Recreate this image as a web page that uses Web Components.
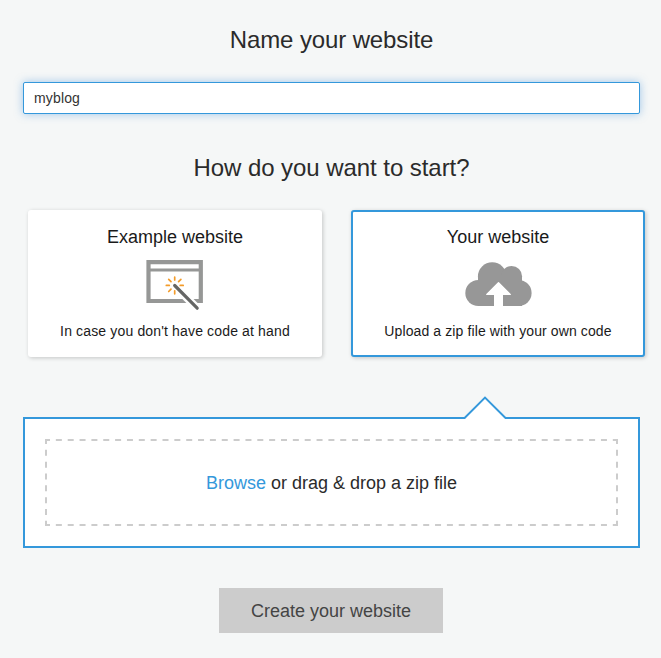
<!DOCTYPE html>
<html lang="en">
<head>
<meta charset="utf-8">
<title>Create website</title>
<style>
html, body { margin: 0; height: 100%; background: #f5f7f7; }
body { font-family: "Liberation Sans", Arial, sans-serif; color: #2b2b2b; overflow: hidden; }
</style>
</head>
<body>
<website-wizard></website-wizard>
<script>
const define = (name, html) => {
  const template = document.createElement('template');
  template.innerHTML = html;
  customElements.define(name, class extends HTMLElement {
    constructor() {
      super();
      this.attachShadow({ mode: 'open' }).append(template.content.cloneNode(true));
    }
  });
};

define('section-title', `
<style>
:host { display: block; height: 28px; font-size: 24px; line-height: 28px; text-align: center; }
</style>
<slot></slot>`);

define('name-field', `
<style>
:host { display: block; }
div { box-sizing: border-box; height: 32px; padding: 0 10px; border: 1px solid #3498db; border-radius: 2px;
  background: #fff; box-shadow: 0 0 8px rgba(72,148,220,.5); font-size: 14px; line-height: 30px; letter-spacing: .15px; color: #333; }
</style>
<div role="textbox"><slot></slot></div>`);

define('browser-icon', `
<style>:host, svg { display: block; width: 58px; height: 52px; }</style>
<svg viewBox="146 259 58 52" fill="none">
  <path d="M148.500 262.200H200.800V301H148.500Z" stroke="#969796" stroke-width="4.200"/>
  <path d="M148 270H201" stroke="#969796" stroke-width="3"/>
  <path d="M174.500 285.500L198.500 309.500" stroke="#fff" stroke-width="8"/>
  <path d="M174.700 277.200V280M174.700 290.800V293.800M166.300 285.400H169.300M180.200 285.400H183.200M168.700 279.300L171 281.600M180.900 279.300L178.600 281.600M168.700 291.500L171 289.200" stroke="#f39c2b" stroke-width="1.700" stroke-linecap="round"/>
  <path d="M174.700 285.500L197.200 308.200" stroke="#656665" stroke-width="3.200" stroke-linecap="round"/>
</svg>`);

define('cloud-icon', `
<style>:host, svg { display: block; width: 68px; height: 52px; }</style>
<svg viewBox="464 259 68 52" fill="#979797">
  <circle cx="478.300" cy="293" r="13"/>
  <circle cx="518.600" cy="293" r="13"/>
  <circle cx="492.200" cy="276.500" r="14.300"/>
  <circle cx="511.600" cy="276.500" r="10.500"/>
  <path d="M478 276H522V306H478Z"/>
  <path d="M498.500 282.800L510 294.200H503V307H494V294.200H487Z" fill="#fff"/>
  <path d="M498.500 282.800L510.200 294.400H486.800Z" fill="#fff" stroke="#fff" stroke-width="1.400" stroke-linejoin="round"/>
</svg>`);

define('start-option', `
<style>
:host { box-sizing: border-box; display: flex; flex-direction: column; align-items: center; width: 294px; height: 147px;
  padding-top: 16px; border-radius: 3px; background: #fff; color: #1a1a1a; box-shadow: 1px 1px 4px rgba(0,0,0,.2); }
:host([selected]) { padding-top: 14px; border: 2px solid #3498db; }
h2 { margin: 0; font-size: 18px; font-weight: normal; line-height: 22px; }
.icon { height: 52px; margin-top: 11px; }
p { margin: 12px 0 0; font-size: 14px; line-height: 16px; letter-spacing: .15px; white-space: nowrap; }
:host([selected]) p { letter-spacing: .11px; }
</style>
<h2><slot name="title"></slot></h2>
<div class="icon"><slot name="icon"></slot></div>
<p><slot></slot></p>`);

define('drop-zone', `
<style>
:host { position: relative; box-sizing: border-box; display: block; height: 131px; padding: 20px; border: 2px solid #3498db; background: #fff; }
.pointer { position: absolute; left: 438px; top: -23px; width: 46px; height: 25px; }
.area { position: relative; display: flex; align-items: center; justify-content: center; height: 87px; font-size: 18px; }
.dashes { position: absolute; inset: 0; width: 573px; height: 87px; }
.area div { line-height: 22px; }
a { color: #3498db; }
</style>
<svg class="pointer" viewBox="463 396 46 25">
  <path d="M464 418L485 397.500L506 418V420H464Z" fill="#fff"/>
  <path d="M463 418H464.600L485 397.600L505.500 418H507" fill="none" stroke="#3498db" stroke-width="2"/>
</svg>
<div class="area">
  <svg class="dashes" viewBox="0 0 573 87" stroke="#ccc" stroke-width="2">
    <path d="M0 1H573M0 86H573" stroke-dasharray="6 5.850" stroke-dashoffset="1"/>
    <path d="M1 0V87M572 0V87" stroke-dasharray="6 5.830" stroke-dashoffset="1"/>
  </svg>
  <div><a>Browse</a> or drag &amp; drop a zip file</div>
</div>`);

define('submit-button', `
<style>
:host { display: block; width: 224px; height: 45px; background: #ccc; color: #444; font-size: 18px; line-height: 46px; text-align: center; }
</style>
<slot></slot>`);

define('website-wizard', `
<style>
:host { display: flex; flex-direction: column; padding: 26px 21px 0 23px; }
.first { letter-spacing: -.12px; }
name-field { margin-top: 28px; }
.second { margin-top: 40px; letter-spacing: -.06px; }
.options { display: flex; gap: 29px; margin: 28px -5px 0 5px; }
drop-zone { margin-top: 60px; }
submit-button { align-self: center; margin: 40px 1px 0 0; }
</style>
<section-title class="first">Name your website</section-title>
<name-field>myblog</name-field>
<section-title class="second">How do you want to start?</section-title>
<div class="options">
  <start-option><span slot="title">Example website</span><browser-icon slot="icon"></browser-icon>In case you don't have code at hand</start-option>
  <start-option selected><span slot="title">Your website</span><cloud-icon slot="icon"></cloud-icon>Upload a zip file with your own code</start-option>
</div>
<drop-zone></drop-zone>
<submit-button>Create your website</submit-button>`);
</script>
</body>
</html>
